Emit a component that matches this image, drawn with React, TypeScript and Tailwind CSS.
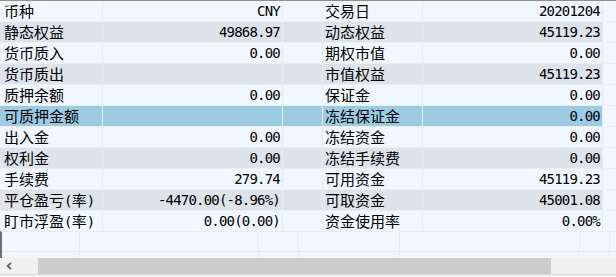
import React from "react";

interface Row {
    left: string;
    leftValue: string;
    right: string;
    rightValue: string;
}

const rows: Row[] = [
    { left: "币种", leftValue: "CNY", right: "交易日", rightValue: "20201204" },
    { left: "静态权益", leftValue: "49868.97", right: "动态权益", rightValue: "45119.23" },
    { left: "货币质入", leftValue: "0.00", right: "期权市值", rightValue: "0.00" },
    { left: "货币质出", leftValue: "", right: "市值权益", rightValue: "45119.23" },
    { left: "质押余额", leftValue: "0.00", right: "保证金", rightValue: "0.00" },
    { left: "可质押金额", leftValue: "", right: "冻结保证金", rightValue: "0.00" },
    { left: "出入金", leftValue: "0.00", right: "冻结资金", rightValue: "0.00" },
    { left: "权利金", leftValue: "0.00", right: "冻结手续费", rightValue: "0.00" },
    { left: "手续费", leftValue: "279.74", right: "可用资金", rightValue: "45119.23" },
    { left: "平仓盈亏(率)", leftValue: "-4470.00(-8.96%)", right: "可取资金", rightValue: "45001.08" },
    { left: "盯市浮盈(率)", leftValue: "0.00(0.00)", right: "资金使用率", rightValue: "0.00%" },
];

const SELECTED = 5;

// labels mix CJK with half-width brackets, keep brackets in the mono face
function Label({ text }: { text: string }) {
    const parts = text.split(/([()])/).filter(Boolean);
    return (
        <>
            {parts.map((p, i) =>
                p === "(" || p === ")" ? (
                    <span key={i} className="font-['DejaVu_Sans_Mono',monospace] text-[14px] tracking-[-0.8px]">
                        {p}
                    </span>
                ) : (
                    <span key={i}>{p}</span>
                )
            )}
        </>
    );
}

export default function App() {
    const rowBg = (i: number) => {
        if (i === SELECTED) return "bg-[#9ccbe4]";
        return i % 2 === 1 ? "bg-[#dce3ea]" : "bg-[#f0f7ff]";
    };

    const label = "font-['Noto_Sans_CJK_SC',sans-serif] text-[15px] text-black whitespace-nowrap overflow-hidden";
    const value = "font-['DejaVu_Sans_Mono',monospace] text-[14px] tracking-[-0.8px] text-black text-right whitespace-nowrap overflow-hidden";

    return (
        <div className="w-[616px] h-[277px] overflow-hidden bg-[#f0f7ff] flex flex-col">
            <div className="h-[231px] shrink-0 overflow-hidden border-t border-[#8f8f8f]">
                {rows.map((r, i) => (
                    <div key={i} className="flex h-[21px] leading-[20px] border-b border-[#eaeff4]">
                        <div className={`w-[103px] pl-[4px] border-r border-[#e6ecf1] ${label} ${rowBg(i)}`}>
                            <Label text={r.left} />
                        </div>
                        <div className={`w-[180px] pr-[2px] border-r border-[#e6ecf1] ${value} ${rowBg(i)}`}>
                            {r.leftValue}
                        </div>
                        <div className={`w-[40px] border-r border-[#e6ecf1] ${rowBg(i)}`} />
                        <div className={`w-[100px] pl-[2px] border-r border-[#e6ecf1] ${label} ${rowBg(i)}`}>
                            <Label text={r.right} />
                        </div>
                        <div className={`w-[180px] pr-[2px] border-r border-[#e6ecf1] ${value} ${rowBg(i)}`}>
                            {r.rightValue}
                        </div>
                        <div className="flex-1" />
                    </div>
                ))}
            </div>

            {/* empty grid left below the rows */}
            <div className="h-[27px] shrink-0 border-l-2 border-t border-[#6e6e6e] border-t-[#e9edf1] flex flex-col">
                {[20, 6].map((h, k) => (
                    <div
                        key={k}
                        className={`flex ${k === 0 ? "border-b border-[#e9edf1]" : ""}`}
                        style={{ height: h }}
                    >
                        <div className="w-[78px] border-r border-[#e9edf1]" />
                        <div className="w-[179px] border-r border-[#e9edf1]" />
                        <div className="w-[40px] border-r border-[#e9edf1]" />
                        <div className="w-[101px] border-r border-[#e9edf1]" />
                        <div className="w-[180px] border-r border-[#e9edf1]" />
                        <div className="w-[30px] border-r border-[#e9edf1]" />
                        <div className="flex-1" />
                    </div>
                ))}
            </div>

            {/* horizontal scrollbar */}
            <div className="h-[16px] shrink-0 flex bg-[#f0f0f0]">
                <div className="w-[38px] flex items-center pl-[6px]">
                    <svg width="6" height="8" viewBox="0 0 6 8">
                        <polyline points="5,0.8 1.6,4 5,7.2" fill="none" stroke="#606060" strokeWidth="1.8" />
                    </svg>
                </div>
                <div className="w-[513px] bg-[#cdcdcd]" />
                <div className="flex-1" />
            </div>
            <div className="h-px shrink-0 bg-[#dadada]" />
            <div className="flex-1 bg-[#f0f0f0]" />
        </div>
    );
}
